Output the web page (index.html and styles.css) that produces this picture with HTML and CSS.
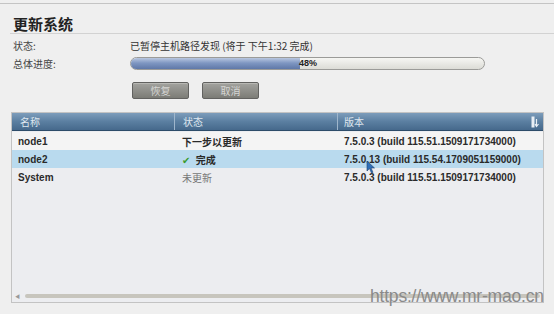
FILE: index.html
```html
<!DOCTYPE html>
<html lang="zh-CN">
<head>
    <meta charset="UTF-8">
    <title>更新系统</title>
    <link rel="stylesheet" href="styles.css">
</head>
<body>
    <div class="window">
        <h1 class="title">更新系统</h1>

        <div class="info">
            <div class="label">状态:</div>
            <div class="value">已暂停主机路径发现 (将于 下午1:32 完成)</div>
            <div class="label">总体进度:</div>
            <div class="value">
                <div class="progress">
                    <div class="progress-fill" style="width: 48%"></div>
                    <span class="progress-text">48%</span>
                </div>
            </div>
            <div></div>
            <div class="buttons">
                <button class="btn">恢复</button>
                <button class="btn">取消</button>
            </div>
        </div>

        <div class="grid">
            <div class="grid-head">
                <div class="col">名称</div>
                <div class="col">状态</div>
                <div class="col col-last">版本
                    <svg class="col-menu" width="9" height="12" viewBox="0 0 9 12">
                        <rect x="0.5" y="0.5" width="3" height="11" fill="#e8eef4"/>
                        <path d="M5.5 3 V10 M4 8 L5.5 10.5 L7.5 8" stroke="#e8eef4" stroke-width="1.2" fill="none"/>
                    </svg>
                </div>
            </div>
            <div class="grid-body">
                <div class="row">
                    <div class="cell">node1</div>
                    <div class="cell cjk">下一步以更新</div>
                    <div class="cell">7.5.0.3 (build 115.51.1509171734000)</div>
                </div>
                <div class="row selected">
                    <div class="cell">node2</div>
                    <div class="cell cjk"><span class="check">&#10004;</span> 完成</div>
                    <div class="cell">7.5.0.13 (build 115.54.1709051159000)</div>
                </div>
                <div class="row">
                    <div class="cell">System</div>
                    <div class="cell cjk muted">未更新</div>
                    <div class="cell">7.5.0.3 (build 115.51.1509171734000)</div>
                </div>
            </div>
            <div class="hscroll">
                <span class="arrow">&#9664;</span>
                <div class="thumb"></div>
            </div>
        </div>

        <!-- pointeur de la souris -->
        <svg class="cursor" width="10" height="14" viewBox="0 0 10 14">
            <path d="M1 1 L1 11 L3.5 8.6 L5.5 13 L7 12.3 L5 8 L8.5 8 Z" fill="#2f6fb8" stroke="#1c3f6e" stroke-width="0.6"/>
        </svg>

        <div class="watermark">https://www.mr-mao.cn</div>
    </div>
</body>
</html>
```

FILE: styles.css
```css
body {
    margin: 0;
    padding: 0;
    background-color: #efefef;
    font-family: "Liberation Sans", "Noto Sans CJK SC", sans-serif;
    color: #2b2b2b;
    width: 554px;
    height: 314px;
    overflow: hidden;
}
.window {
    position: relative;
    margin-top: 3px;
    border-top: 1px solid #c4c4c4;
    height: 310px;
}
.title {
    margin: 0 0 0 10px;
    padding: 11px 0 0 3px;
    height: 18px;
    font-family: "Noto Sans CJK SC", sans-serif;
    font-size: 15px;
    font-weight: bold;
    line-height: 18px;
    color: #222;
    border-bottom: 1px solid #d2d2d2;
}
.info {
    display: grid;
    grid-template-columns: 117px 1fr;
    grid-template-rows: 18px 18px 28px;
    margin: 2px 0 0 13px;
    align-items: center;
    font-family: "Noto Sans CJK SC", sans-serif;
    font-size: 10px;
}
.label {
    color: #444;
}
.value {
    color: #333;
}
.progress {
    position: relative;
    width: 353px;
    height: 11px;
    border: 1px solid #9b9b98;
    border-radius: 7px;
    background: linear-gradient(#f6f6f3, #dcdcd6);
    overflow: hidden;
}
.progress-fill {
    height: 100%;
    background: linear-gradient(#b9c7e0, #7f97c2 45%, #5f78a8);
}
.progress-text {
    position: absolute;
    left: 168px;
    top: -1px;
    font-family: "Liberation Sans", sans-serif;
    font-size: 9px;
    font-weight: bold;
    line-height: 13px;
    color: #222;
}
.buttons {
    display: flex;
    gap: 13px;
    padding-left: 2px;
    align-self: end;
    padding-bottom: 1px;
}
.btn {
    width: 57px;
    height: 17px;
    padding: 0;
    font-family: "Noto Sans CJK SC", sans-serif;
    font-size: 10px;
    color: #d6d6d4;
    background: linear-gradient(#a3a39f, #7c7c76);
    border: 1px solid #626260;
    border-radius: 2px;
    box-shadow: inset 0 1px 0 #b8b8b4;
}
.grid {
    margin: 12px 0 0 11px;
    width: 531px;
    height: 189px;
    border: 1px solid #c3c3c3;
    background-color: #ecedf0;
    position: relative;
}
.grid-head {
    display: grid;
    grid-template-columns: 163px 163px 1fr;
    height: 17px;
    background: linear-gradient(#7d9dbb, #5b7fa1 50%, #46698c);
    border-bottom: 1px solid #2d4c69;
    font-family: "Noto Sans CJK SC", sans-serif;
    font-size: 10px;
    color: #dfe7ef;
}
.col {
    display: flex;
    align-items: center;
    padding-left: 8px;
    border-right: 1px solid #9fb6cc;
}
.col-last {
    border-right: none;
    padding-left: 6px;
    position: relative;
}
.col-menu {
    position: absolute;
    right: 3px;
    top: 3px;
}
.grid-body {
    padding-top: 1px;
}
.row {
    display: grid;
    grid-template-columns: 163px 163px 1fr;
    height: 18px;
    align-items: center;
    font-size: 10px;
    font-weight: bold;
    color: #2a2a2a;
}
.row:first-child {
    background-color: #f4f4f4;
}
.row.selected {
    background-color: #b9daee;
}
.cell {
    padding-left: 6px;
    white-space: nowrap;
}
.cell.cjk {
    font-family: "Noto Sans CJK SC", sans-serif;
    padding-left: 7px;
}
.muted {
    color: #777;
    font-weight: normal;
}
.check {
    color: #3a9a2e;
    font-family: "DejaVu Sans", sans-serif;
    font-size: 10px;
    margin-right: 3px;
}
.hscroll {
    position: absolute;
    left: 3px;
    right: 3px;
    bottom: 4px;
    height: 5px;
    display: flex;
    align-items: center;
    gap: 5px;
}
.arrow {
    font-size: 5px;
    color: #999;
}
.thumb {
    flex: 1;
    height: 4px;
    border-radius: 2px;
    background-color: #c7c5bd;
}
.cursor {
    position: absolute;
    left: 366px;
    top: 156px;
}
.watermark {
    position: absolute;
    left: 370px;
    top: 283px;
    font-family: "Liberation Sans", sans-serif;
    font-size: 17.5px;
    line-height: 18px;
    color: #8a8a8a;
    letter-spacing: -0.2px;
}
```
